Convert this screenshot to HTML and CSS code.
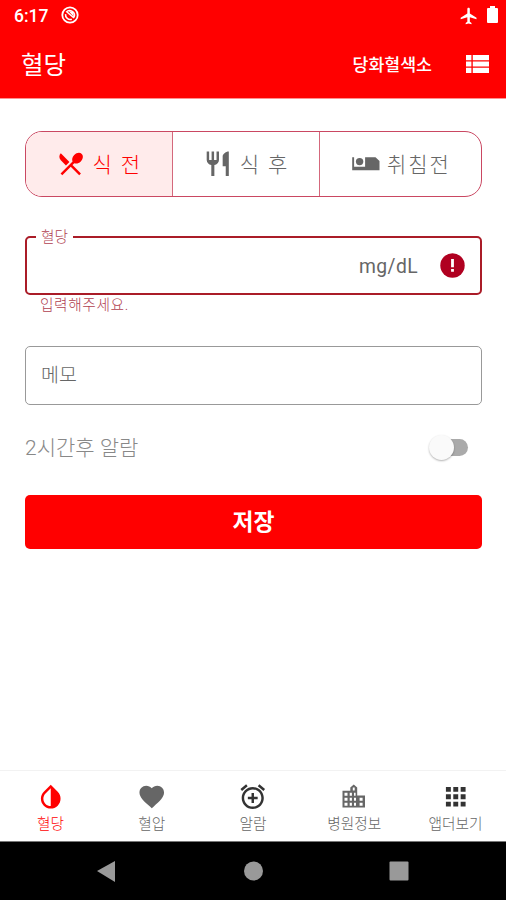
FILE: index.html
```html
<!DOCTYPE html>
<html lang="ko">
<head>
<meta charset="utf-8">
<title>혈당</title>
<link rel="stylesheet" href="styles.css">
</head>
<body>
<div class="status">
  <span class="time">6:17</span>
  <svg class="sync" viewBox="0 0 18 18"><circle cx="9" cy="9" r="7.7" fill="none" stroke="#fff" stroke-width="1.8"/><path d="M5.2 6.2A4.7 4.7 0 0 1 13 11.2M4.6 8.2A4.6 4.6 0 0 0 10.8 13.2M6 6l7 6" fill="none" stroke="#fff" stroke-width="1.6"/><path d="M7.5 5l4.5 1 1 5z" fill="#fff"/></svg>
  <span class="spacer"></span>
  <svg class="plane" viewBox="0 0 24 24"><path d="M21 16v-2l-8-5V3.5c0-.83-.67-1.5-1.5-1.5S10 2.67 10 3.5V9l-8 5v2l8-2.5V19l-2 1.5V22l3.5-1 3.5 1v-1.5L13 19v-5.5l8 2.5z"/></svg>
  <svg class="battery" viewBox="0 0 11 17"><path d="M3 0h5v2h2q1 0 1 1v13q0 1-1 1H1q-1 0-1-1V3q0-1 1-1h2z"/></svg>
</div>
<header class="toolbar">
  <h1>혈당</h1>
  <span class="action">당화혈색소</span>
  <svg class="list" viewBox="4 5 17 14" preserveAspectRatio="none"><path d="M4 14h4v-4H4v4zm0 5h4v-4H4v4zM4 9h4V5H4v4zm5 5h12v-4H9v4zm0 5h12v-4H9v4zM9 5v4h12V5H9z"/></svg>
</header>
<main>
  <div class="segments">
    <div class="segment selected">
      <svg viewBox="0 0 24 24"><path d="M8.1 13.34l2.83-2.83L3.91 3.5c-1.56 1.56-1.56 4.09 0 5.66l4.19 4.18zm6.78-1.81c1.53.71 3.68.21 5.27-1.38 1.91-1.91 2.28-4.65.81-6.12-1.46-1.46-4.2-1.1-6.12.81-1.59 1.59-2.09 3.74-1.38 5.27L3.7 19.87l1.41 1.41L12 14.41l6.88 6.88 1.41-1.41L13.41 13l1.47-1.47z"/></svg>
      <span>식 전</span>
    </div>
    <div class="segment">
      <svg viewBox="0 0 24 24"><path d="M11 9H9V2H7v7H5V2H3v7c0 2.12 1.66 3.84 3.75 3.97V22h2.5v-9.03C11.34 12.84 13 11.12 13 9V2h-2v7zm5-3v8h2.5v8H21V2c-2.76 0-5 2.24-5 4z"/></svg>
      <span>식 후</span>
    </div>
    <div class="segment">
      <svg viewBox="0 0 29.5 29.5"><path d="M1.2 8.2h1.9v9.6h11V8.2h10.4l4 3.8v9.2H1.2z"/><circle cx="8.6" cy="12.6" r="3.7"/></svg>
      <span>취침전</span>
    </div>
  </div>
  <div class="field error">
    <span class="label">혈당</span>
    <span class="unit">mg/dL</span>
    <svg viewBox="0 0 25 25"><circle cx="12.5" cy="12.5" r="12.2" fill="#b00020"/><path d="M11.1 6h2.8v8.2h-2.8zM11.1 16h2.8v2.8h-2.8z" fill="#fff"/></svg>
  </div>
  <p class="helper">입력해주세요.</p>
  <div class="field memo">메모</div>
  <div class="alarm"><span>2시간후 알람</span><span class="switch"><span class="thumb"></span></span></div>
  <div class="save">저장</div>
</main>
<nav class="tabs">
  <div class="tab active"><svg viewBox="0 0 24 24"><path d="M17.66 7.93L12 2.27 6.34 7.93c-3.12 3.12-3.12 8.19 0 11.31C7.9 20.8 9.95 21.58 12 21.58c2.05 0 4.1-.78 5.66-2.34 3.12-3.12 3.12-8.19 0-11.31zM12 19.59c-1.6 0-3.11-.62-4.24-1.76C6.62 16.69 6 15.19 6 13.59s.62-3.11 1.76-4.24L12 5.1v14.49z"/></svg><span>혈당</span></div>
  <div class="tab"><svg viewBox="0 0 24 24"><path d="M12 21.35l-1.45-1.32C5.4 15.36 2 12.28 2 8.5 2 5.42 4.42 3 7.5 3c1.74 0 3.41.81 4.5 2.09C13.09 3.81 14.76 3 16.5 3 19.58 3 22 5.42 22 8.5c0 3.78-3.4 6.86-8.55 11.54L12 21.35z"/></svg><span>혈압</span></div>
  <div class="tab"><svg class="dark" viewBox="0 0 24 24"><path d="M7.88 3.39L6.6 1.86 2 5.71l1.29 1.53 4.59-3.85zM22 5.72l-4.6-3.86-1.29 1.53 4.6 3.86L22 5.72zM12 4c-4.97 0-9 4.03-9 9s4.02 9 9 9c4.97 0 9-4.03 9-9s-4.03-9-9-9zm0 16c-3.87 0-7-3.13-7-7s3.13-7 7-7 7 3.13 7 7-3.13 7-7 7zm1-11h-2v3H8v2h3v3h2v-3h3v-2h-3V9z"/></svg><span>알람</span></div>
  <div class="tab"><svg viewBox="0 0 29.5 29.5"><path fill-rule="evenodd" d="M3.5 8.8h7.8V5.6L14.75 2.4 18.2 5.6v8H26v12H3.5zM5.5 10.8v3h3v-3zM5.5 15.8v3h3v-3zM5.5 20.8v3h3v-3zM10.7 10.8v3h2.2v-3zM10.7 15.8v3h2.2v-3zM10.7 20.8v3h2.2v-3zM13.8 5.6v3h1.9v-3zM15 10.8v3h1.6v-3zM15 15.8v3h2v-3zM15 20.8v3h2v-3zM20.6 15.8v3h3v-3zM20.6 20.8v3h3v-3z"/></svg><span>병원정보</span></div>
  <div class="tab"><svg class="dark" viewBox="0 0 24 24"><path d="M4 8h4V4H4v4zm6 12h4v-4h-4v4zm-6 0h4v-4H4v4zm0-6h4v-4H4v4zm6 0h4v-4h-4v4zm6-10v4h4V4h-4zm-6 4h4V4h-4v4zm6 6h4v-4h-4v4zm0 6h4v-4h-4v4z"/></svg><span>앱더보기</span></div>
</nav>
<footer class="system">
  <svg viewBox="0 0 506 57"><path d="M97 29L115 19V40z"/><circle cx="253.5" cy="29" r="9.5"/><rect x="389.5" y="19.5" width="19" height="19" rx="1"/></svg>
</footer>
</body>
</html>
```
FILE: styles.css
```css
* { box-sizing: border-box; }
body {
  margin: 0;
  width: 506px;
  height: 900px;
  overflow: hidden;
  display: flex;
  flex-direction: column;
  background: #fff;
  color: #666;
  font-family: Roboto, "Noto Sans CJK KR", sans-serif;
}
svg { display: block; flex: none; fill: currentColor; }
.status {
  height: 30px;
  padding: 2px 8px 0 14px;
  display: flex;
  align-items: center;
  background: #f00;
  color: #fff;
}
.time { width: 47px; font-size: 17.5px; font-weight: 500; }
.sync { width: 18px; height: 18px; margin-top: -3px; }
.spacer { flex: 1; }
.plane { width: 20px; height: 20px; margin-right: 8px; margin-top: -1px; }
.battery { width: 11px; height: 17px; margin-top: -3px; }
.toolbar {
  height: 69px;
  padding: 0 17px 1px 21px;
  display: flex;
  align-items: center;
  background: #f00;
  color: #fff;
  border-bottom: 1px solid #ff8f8f;
}
h1 { flex: 1; margin: 0; padding-top: 4px; font-size: 24.5px; font-weight: 400; line-height: 36px; }
.action { margin-right: 34px; font-size: 17.3px; font-weight: 500; }
.list { width: 23px; height: 18px; }
main { flex: 1; padding: 32px 24px 0 25px; }
.segments {
  height: 66px;
  display: flex;
  border: 1.5px solid #ca4862;
  border-radius: 17px;
  overflow: hidden;
}
.segment {
  flex: 1 1 0;
  display: flex;
  align-items: center;
  justify-content: center;
  font-size: 21px;
  font-weight: 300;
  letter-spacing: 1.9px;
}
.segment + .segment { border-left: 1.5px solid #d4687c; }
.segment:last-child { flex-grow: 1.1; }
.segment svg { width: 29.5px; height: 29.5px; margin-right: 7px; }
.segment span { padding-bottom: 2px; }
.segment.selected { background: #ffebeb; color: #f00; }
.field {
  height: 59px;
  display: flex;
  align-items: center;
  border-radius: 5px;
}
.error {
  position: relative;
  margin-top: 39px;
  padding-right: 15px;
  justify-content: flex-end;
  border: 2px solid #aa1c28;
}
.label {
  position: absolute;
  top: -11px;
  left: 9px;
  padding: 0 5px;
  background: #fff;
  color: #b04050;
  font-size: 14.7px;
  font-weight: 300;
  line-height: 20px;
}
.unit { margin-right: 22px; font-size: 19.3px; letter-spacing: .4px; padding-top: 2px; }
.error svg { width: 25px; height: 25px; }
.helper { margin: 0 0 0 15px; height: 51px; font-size: 14.7px; font-weight: 300; letter-spacing: .6px; line-height: 21px; color: #b04050; }
.memo { padding: 0 0 5px 15px; border: 1px solid #999; font-size: 19.5px; font-weight: 300; }
.alarm {
  height: 90px;
  display: flex;
  align-items: center;
  justify-content: space-between;
  padding: 0 14px 6px 0;
  font-size: 21px;
  font-weight: 300;
  color: #888;
}
.alarm > span:first-child { padding-bottom: 3px; }
.switch { position: relative; width: 35px; height: 17px; border-radius: 9px; background: #aaa; }
.thumb {
  position: absolute;
  left: -4px;
  top: -4px;
  width: 25px;
  height: 25px;
  border-radius: 50%;
  background: #fafafa;
  box-shadow: 0 1px 2px rgba(0, 0, 0, .3);
}
.save {
  height: 54px;
  padding-bottom: 3px;
  border-radius: 5px;
  background: #f00;
  color: #fff;
  display: flex;
  align-items: center;
  justify-content: center;
  font-size: 22.8px;
  font-weight: 700;
}
.tabs { height: 71px; display: flex; border-top: 1px solid #f2f2f2; }
.tab { flex: 1 1 0; display: flex; flex-direction: column; align-items: center; padding-top: 11px; font-size: 14.7px; font-weight: 300; line-height: 20px; }
.tab svg { width: 29.5px; height: 29.5px; margin-bottom: 2px; }
.tab.active { color: #f00; }
.dark { color: #333; }
.system { height: 59px; background: #000; color: #999; border-top: 1px solid #777; }
.system svg { width: 506px; height: 57px; }
```
